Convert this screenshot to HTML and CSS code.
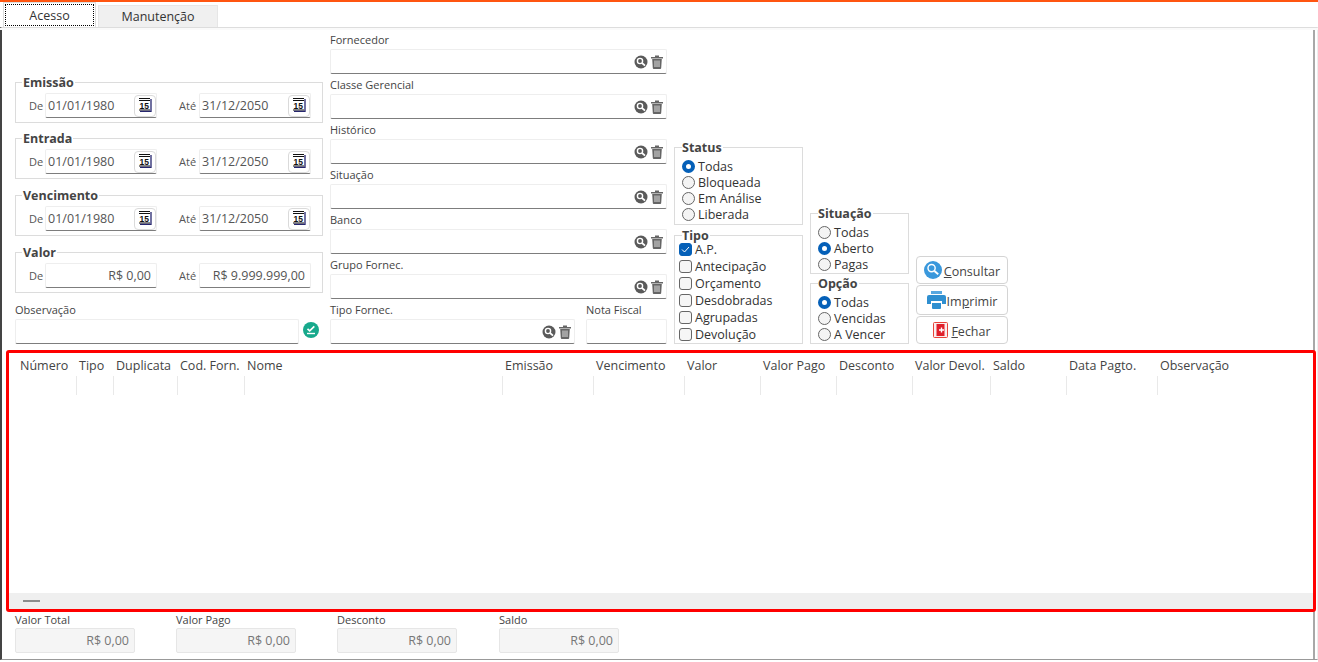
FILE: index.html
```html
<!DOCTYPE html>
<html lang="pt-BR">
<head>
<meta charset="UTF-8" />
<title>Contas a Pagar</title>
<link rel="stylesheet" href="styles.css">
</head>
<body>

<svg class="defs" width="0" height="0">
  <symbol id="i-search" viewBox="0 0 14 14">
    <circle cx="7" cy="7" r="6.5" fill="#5a5a5a"/>
    <circle cx="6" cy="6" r="2.6" fill="none" stroke="#fff" stroke-width="1.4"/>
    <path d="M8 8l3 2.6" stroke="#fff" stroke-width="1.8"/>
  </symbol>
  <symbol id="i-trash" viewBox="0 0 12 14">
    <path d="M0 2h12v1.4H0zM4 .4h4v1.6H4z" fill="#666"/>
    <path d="M1.2 4h9.600l-.6 9a1 1 0 0 1-1 1H2.800a1 1 0 0 1-1-1z" fill="#666"/>
    <path d="M4 5.500v6.500M6 5.500v6.500M8 5.500v6.500" stroke="#eee" stroke-width=".9"/>
  </symbol>
  <symbol id="i-cal" viewBox="0 0 14 14">
    <path d="M1 0h11v13H1z" fill="#fff"/>
    <path d="M1 .5h11M1 2.500h11M1 12h11" stroke="#111" stroke-width="1"/>
    <path d="M13 1v12.500H2" fill="none" stroke="#26266e" stroke-width="1.300"/>
    <text x="1.500" y="10.500" font-family="Liberation Sans" font-size="8.500" font-weight="700" fill="#111">15</text>
  </symbol>
</svg>

<div class="tabs">
  <div class="tab tab-active"><span>Acesso</span></div>
  <div class="tab">Manutenção</div>
</div>

<div class="panel">
  <div class="panel-strip"></div>
  <div class="filters">

    <div class="col col-dates">
      <fieldset class="box period">
        <legend>Emissão</legend>
        <div class="range">
          <span class="lbl-de">De</span>
          <div class="input date">01/01/1980<button class="cal"><svg width="14" height="14"><use href="#i-cal"/></svg></button></div>
          <span class="lbl-ate">Até</span>
          <div class="input date">31/12/2050<button class="cal"><svg width="14" height="14"><use href="#i-cal"/></svg></button></div>
        </div>
      </fieldset>
      <fieldset class="box period">
        <legend>Entrada</legend>
        <div class="range">
          <span class="lbl-de">De</span>
          <div class="input date">01/01/1980<button class="cal"><svg width="14" height="14"><use href="#i-cal"/></svg></button></div>
          <span class="lbl-ate">Até</span>
          <div class="input date">31/12/2050<button class="cal"><svg width="14" height="14"><use href="#i-cal"/></svg></button></div>
        </div>
      </fieldset>
      <fieldset class="box period">
        <legend>Vencimento</legend>
        <div class="range">
          <span class="lbl-de">De</span>
          <div class="input date">01/01/1980<button class="cal"><svg width="14" height="14"><use href="#i-cal"/></svg></button></div>
          <span class="lbl-ate">Até</span>
          <div class="input date">31/12/2050<button class="cal"><svg width="14" height="14"><use href="#i-cal"/></svg></button></div>
        </div>
      </fieldset>
      <fieldset class="box period">
        <legend>Valor</legend>
        <div class="range">
          <span class="lbl-de">De</span>
          <div class="input money">R$ 0,00</div>
          <span class="lbl-ate">Até</span>
          <div class="input money">R$ 9.999.999,00</div>
        </div>
      </fieldset>
      <div class="field obs">
        <label>Observação</label>
        <div class="obs-row">
          <div class="input obs-input"></div>
          <svg class="obs-icon" width="16" height="16" viewBox="0 0 16 16">
            <circle cx="8" cy="8" r="8" fill="#17a98c"/>
            <path d="M4.500 6.800l2.200 2 4.600-4.400" fill="none" stroke="#fff" stroke-width="1.700"/>
            <path d="M4 11.500h8" stroke="#fff" stroke-width="1.400"/>
          </svg>
        </div>
      </div>
    </div>

    <div class="col col-lookup">
      <div class="field"><label>Fornecedor</label><div class="input lookup"><svg width="14" height="14"><use href="#i-search"/></svg><svg width="12" height="14"><use href="#i-trash"/></svg></div></div>
      <div class="field"><label>Classe Gerencial</label><div class="input lookup"><svg width="14" height="14"><use href="#i-search"/></svg><svg width="12" height="14"><use href="#i-trash"/></svg></div></div>
      <div class="field"><label>Histórico</label><div class="input lookup"><svg width="14" height="14"><use href="#i-search"/></svg><svg width="12" height="14"><use href="#i-trash"/></svg></div></div>
      <div class="field"><label>Situação</label><div class="input lookup"><svg width="14" height="14"><use href="#i-search"/></svg><svg width="12" height="14"><use href="#i-trash"/></svg></div></div>
      <div class="field"><label>Banco</label><div class="input lookup"><svg width="14" height="14"><use href="#i-search"/></svg><svg width="12" height="14"><use href="#i-trash"/></svg></div></div>
      <div class="field"><label>Grupo Fornec.</label><div class="input lookup"><svg width="14" height="14"><use href="#i-search"/></svg><svg width="12" height="14"><use href="#i-trash"/></svg></div></div>
      <div class="field-row">
        <div class="field field-tipo"><label>Tipo Fornec.</label><div class="input lookup"><svg width="14" height="14"><use href="#i-search"/></svg><svg width="12" height="14"><use href="#i-trash"/></svg></div></div>
        <div class="field field-nota"><label>Nota Fiscal</label><div class="input"></div></div>
      </div>
    </div>

    <div class="col col-status">
      <fieldset class="box opts opts-status">
        <legend>Status</legend>
        <div class="opt"><i class="radio on"></i>Todas</div>
        <div class="opt"><i class="radio"></i>Bloqueada</div>
        <div class="opt"><i class="radio"></i>Em Análise</div>
        <div class="opt"><i class="radio"></i>Liberada</div>
      </fieldset>
      <fieldset class="box opts opts-tipo">
        <legend>Tipo</legend>
        <div class="opt"><i class="check on"><svg width="13" height="13" viewBox="0 0 13 13"><path d="M3 6.500l2.500 2.500 4.500-5" fill="none" stroke="#fff" stroke-width="1"/></svg></i>A.P.</div>
        <div class="opt"><i class="check"></i>Antecipação</div>
        <div class="opt"><i class="check"></i>Orçamento</div>
        <div class="opt"><i class="check"></i>Desdobradas</div>
        <div class="opt"><i class="check"></i>Agrupadas</div>
        <div class="opt"><i class="check"></i>Devolução</div>
      </fieldset>
    </div>

    <div class="col col-situacao">
      <fieldset class="box opts opts-sit">
        <legend>Situação</legend>
        <div class="opt"><i class="radio"></i>Todas</div>
        <div class="opt"><i class="radio on"></i>Aberto</div>
        <div class="opt"><i class="radio"></i>Pagas</div>
      </fieldset>
      <fieldset class="box opts opts-sit">
        <legend>Opção</legend>
        <div class="opt"><i class="radio on"></i>Todas</div>
        <div class="opt"><i class="radio"></i>Vencidas</div>
        <div class="opt"><i class="radio"></i>A Vencer</div>
      </fieldset>
    </div>

    <div class="col col-buttons">
      <button class="btn btn-consultar">
        <svg width="18" height="18" viewBox="0 0 19 19">
          <circle cx="9.500" cy="9.500" r="9.500" fill="#3a98dc"/>
          <circle cx="8" cy="7.500" r="3.800" fill="none" stroke="#fff" stroke-width="1.500"/>
          <path d="M11 10.500l4 3.500" stroke="#fff" stroke-width="2"/>
        </svg>
        <span><u>C</u>onsultar</span>
      </button>
      <button class="btn btn-imprimir">
        <svg width="19" height="18" viewBox="0 0 19 18">
          <path d="M4 0h11v3H4z" fill="#58a8e0"/>
          <path d="M2 4h15a2 2 0 0 1 2 2v7h-4v-3H4v3H0V6a2 2 0 0 1 2-2z" fill="#2f8fd0"/>
          <path d="M4 10h11v1.500H4z" fill="#fff"/>
          <path d="M5 12h9v5a1 1 0 0 1-1 1H6a1 1 0 0 1-1-1z" fill="#2f8fd0"/>
        </svg>
        <span>Im<u>p</u>rimir</span>
      </button>
      <button class="btn btn-fechar">
        <svg width="15" height="16" viewBox="0 0 15 16">
          <rect x=".5" y=".5" width="14" height="15" rx="1" fill="#fbeeee" stroke="#e8433a"/>
          <path d="M3.500 2h8v12h-8z" fill="#e01f2a"/>
          <path d="M6 8h5M8.500 5.500v5" stroke="#fff" stroke-width="1.400"/>
        </svg>
        <span><u>F</u>echar</span>
      </button>
    </div>
  </div>

  <div class="grid">
    <div class="grid-head">
      <div class="gc gc-num">Número</div>
      <div class="gc gc-tipo">Tipo</div>
      <div class="gc gc-dup">Duplicata</div>
      <div class="gc gc-cod">Cod. Forn.</div>
      <div class="gc gc-nome">Nome</div>
      <div class="gc gc-date">Emissão</div>
      <div class="gc gc-date">Vencimento</div>
      <div class="gc gc-val">Valor</div>
      <div class="gc gc-val">Valor Pago</div>
      <div class="gc gc-val">Desconto</div>
      <div class="gc gc-val3">Valor Devol.</div>
      <div class="gc gc-val">Saldo</div>
      <div class="gc gc-date">Data Pagto.</div>
      <div class="gc gc-obs">Observação</div>
    </div>
    <div class="grid-body"></div>
    <div class="grid-bar"><span class="bar-dash"></span></div>
  </div>

  <div class="totals">
    <div class="total"><label>Valor Total</label><div class="input money readonly">R$ 0,00</div></div>
    <div class="total"><label>Valor Pago</label><div class="input money readonly">R$ 0,00</div></div>
    <div class="total"><label>Desconto</label><div class="input money readonly">R$ 0,00</div></div>
    <div class="total total-last"><label>Saldo</label><div class="input money readonly">R$ 0,00</div></div>
  </div>
</div>

</body>
</html>
```
FILE: styles.css
```css
* {
  box-sizing: border-box;
}
html, body {
  height: 100%;
}
body {
  margin: 0;
  height: 662px;
  overflow: hidden;
  background: #fff;
  border-top: 2px solid #ff5510;
  font-family: "Open Sans", "Noto Sans", sans-serif;
  font-size: 12px;
  color: #333;
}
.defs {
  position: absolute;
}

/* abas */
.tabs {
  display: flex;
  height: 25px;
  padding-left: 3px;
  align-items: flex-end;
}
.tab {
  width: 120px;
  height: 22px;
  margin-left: 2px;
  padding-top: 2px;
  background: #f0f0f0;
  border: 1px solid #e6e6e6;
  border-bottom: 0;
  font-size: 12.500px;
  line-height: 18px;
  text-align: center;
}
.tab-active {
  width: 93px;
  height: 25px;
  margin-left: 0;
  padding: 1px;
  background: #fff;
  border-color: #ddd;
}
.tab-active span {
  display: block;
  height: 22px;
  padding-top: 2px;
  border: 1px dotted #000;
  line-height: 18px;
}

/* painel */
.panel {
  position: relative;
  height: 633px;
  border-top: 1px solid #ddd;
  border-left: 2px solid #444;
  border-right: 1px solid #eee;
  border-bottom: 1px solid #999;
  background: linear-gradient(#a8a8a8, #a8a8a8) no-repeat right 2px top 0 / 2px 100%;
}
.panel-strip {
  position: absolute;
  top: 0;
  left: -2px;
  right: -1px;
  height: 2px;
  background: #fafafa;
}
.filters {
  display: flex;
  align-items: flex-end;
  gap: 7px;
  height: 316px;
  padding-left: 13px;
}
.col {
  display: flex;
  flex-direction: column;
}
.col-dates { width: 308px; }
.col-lookup { width: 337px; }
.col-status { width: 129px; }
.col-situacao { width: 99px; }
.col-buttons { width: 92px; }

/* grupos */
.box {
  margin: 0;
  padding: 0;
  min-width: 0;
  border: 1px solid #dcdcdc;
}
.box legend {
  margin-left: 6px;
  padding: 1px 1px 0;
  height: 14px;
  font-size: 12.500px;
  font-weight: 700;
  line-height: 14px;
  color: #444;
}
.period {
  padding: 4px 4px 4px 0;
  margin-bottom: 9px;
}
.period:first-child {
  margin-bottom: 8px;
}
.range {
  display: flex;
  align-items: center;
}
.lbl-de {
  width: 29px;
  padding-left: 13px;
  font-size: 11px;
  color: #555;
}
.lbl-ate {
  width: 42px;
  padding-left: 22px;
  font-size: 11px;
  color: #555;
}

/* campos */
.input {
  display: flex;
  align-items: center;
  height: 25px;
  background: #fff;
  border: 1px solid #eeeeee;
  border-bottom: 1px solid #7d7d7d;
  border-radius: 2px;
  font-size: 12.500px;
  color: #555;
}
.date {
  width: 112px;
  padding-left: 2px;
  justify-content: space-between;
}
.cal {
  display: flex;
  align-items: center;
  justify-content: center;
  width: 22px;
  height: 22px;
  padding: 0 0 1px;
  background: #fff;
  border: 1px solid #dadada;
  border-radius: 4px;
}
.money {
  width: 112px;
  padding-right: 5px;
  justify-content: flex-end;
}
.field {
  margin-top: 2px;
}
.field label, .total label {
  display: block;
  height: 18px;
  font-size: 11px;
  line-height: 18px;
  color: #444;
}
.lookup {
  justify-content: flex-end;
  gap: 3px;
  padding-right: 3px;
}
.obs {
  margin-top: -1px;
}
.obs-row {
  display: flex;
  align-items: flex-start;
  gap: 4px;
}
.obs-input {
  width: 284px;
}
.obs-icon {
  margin-top: 3px;
}
.field-row {
  display: flex;
  justify-content: space-between;
}
.field-tipo { width: 245px; }
.field-nota { width: 81px; }

/* opcoes */
.opt {
  display: flex;
  align-items: center;
  font-size: 12.500px;
  color: #333;
}
.radio {
  flex: none;
  width: 13px;
  height: 13px;
  margin-right: 3px;
  background: #f4f4f4;
  border: 1px solid #666;
  border-radius: 50%;
}
.radio.on {
  background: #fff;
  border: 4px solid #0560b8;
}
.check {
  flex: none;
  display: block;
  width: 13px;
  height: 13px;
  margin-right: 3px;
  background: #f6f6f6;
  border: 1px solid #666;
  border-radius: 3px;
}
.check svg {
  display: block;
  margin: -1px;
}
.check.on {
  background: #0560b8;
  border-color: #0560b8;
}
.opts legend {
  margin-left: 0;
  padding: 1px 1px 0 0;
}
.opts-status {
  padding: 4px 0 2px 7px;
  margin-bottom: 3px;
}
.opts-status .opt {
  height: 16px;
}
.opts-tipo {
  padding: 0 0 0 4px;
}
.opts-tipo legend {
  margin-left: 3px;
  margin-bottom: -1px;
}
.opts-tipo .opt {
  height: 17px;
}
.opts-sit {
  padding: 4px 0 1px 7px;
}
.opts-sit + .opts-sit {
  margin-top: 2px;
}
.opts-sit .opt {
  height: 16px;
}

/* botoes */
.btn {
  display: flex;
  align-items: center;
  justify-content: center;
  gap: 2px;
  width: 92px;
  padding: 0;
  background: #fff;
  border: 1px solid #d4d4d4;
  border-radius: 4px;
  font-family: inherit;
  font-size: 12.500px;
  color: #444;
}
.btn span {
  padding-top: 2px;
}
.btn-consultar { height: 28px; }
.btn-imprimir { height: 30px; margin-top: 1px; gap: 1px; }
.btn-fechar { height: 28px; margin-top: 1px; gap: 3px; }

/* tabela */
.grid {
  display: flex;
  flex-direction: column;
  width: 1310px;
  height: 262px;
  margin: 6px 0 0 4px;
  background: #fff;
  border: 3px solid #f00;
  border-radius: 3px;
}
.grid-head {
  display: flex;
  height: 42px;
  padding-left: 9px;
}
.gc {
  height: 42px;
  padding: 3px 0 0 2px;
  font-size: 12.500px;
  line-height: 20px;
  color: #444;
  background: linear-gradient(#e9e9e9, #e9e9e9) right 23px / 1px 19px no-repeat;
}
.gc-num { width: 59px; }
.gc-tipo { width: 37px; }
.gc-dup { width: 64px; }
.gc-cod { width: 67px; }
.gc-nome { width: 258px; }
.gc-date { width: 91px; }
.gc-val { width: 76px; }
.gc-val3 { width: 78px; }
.gc-obs { width: 91px; background: none; }
.grid-body {
  flex: 1;
}
.grid-bar {
  display: flex;
  align-items: center;
  height: 16px;
  padding-left: 14px;
  background: #efefef;
}
.bar-dash {
  width: 17px;
  height: 2px;
  background: #8c8c8c;
}

/* totais */
.totals {
  display: flex;
  gap: 41px;
  padding-left: 13px;
}
.total {
  width: 120px;
}
.total label {
  height: 16px;
  line-height: 15px;
}
.total-last {
  margin-left: 1px;
}
.readonly {
  width: 120px;
  padding-right: 5px;
  background: #f5f5f5;
  border-color: #e6e6e6;
  color: #777;
}
```
